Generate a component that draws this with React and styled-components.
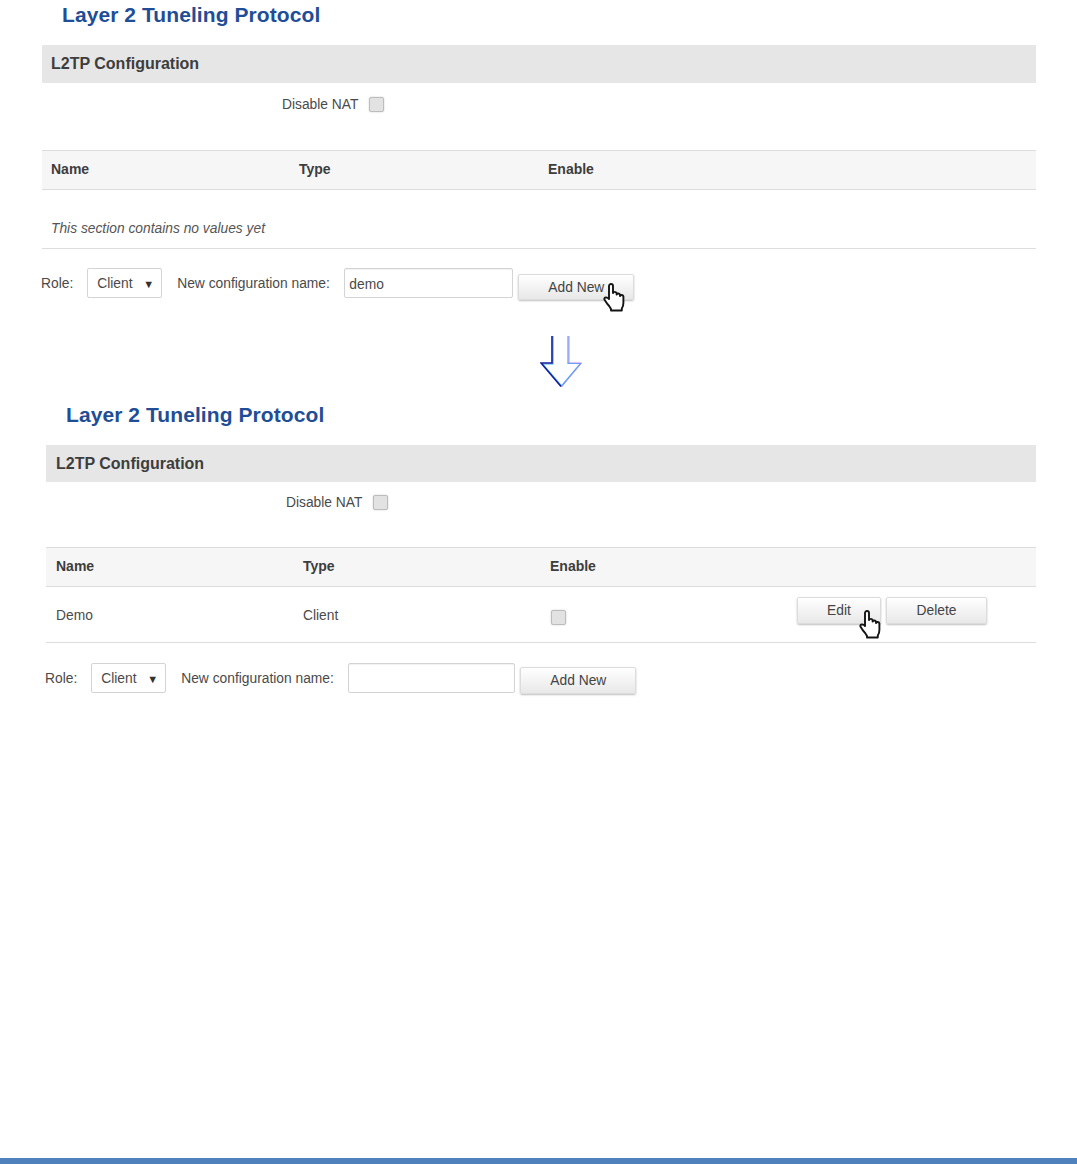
import styled, { createGlobalStyle } from "styled-components"

const Global = createGlobalStyle`
html, body {
  margin: 0;
  padding: 0;
  background: #ffffff;
}
body {
  font-family: "Liberation Sans", Arial, sans-serif;
  font-size: 13.8px;
  color: #4a4a4a;
}
`

const Page = styled.div`
display: flex;
flex-direction: column;
min-height: 1164px;
box-sizing: border-box;
`

const Panel = styled.section`
margin-left: ${p => p.$left}px;
width: ${p => 1036 - p.$left}px;
`

const Title = styled.h2`
margin: 0 0 ${p => p.$gap}px 20px;
font-size: 21px;
letter-spacing: 0.08px;
line-height: 30px;
font-weight: 700;
color: #1f4e96;
`

const SectionHead = styled.div`
height: ${p => p.$height}px;
line-height: ${p => p.$height}px;
padding-left: ${p => p.$pad}px;
background: #e6e6e6;
color: #3d3d3d;
font-size: 16px;
font-weight: 700;
`

const NatRow = styled.div`
display: flex;
align-items: center;
gap: 11px;
padding-left: 240px;
height: ${p => p.$height}px;
margin-bottom: ${p => p.$gap}px;
`

const Check = styled.input.attrs({ type: "checkbox", disabled: true })`
appearance: none;
box-sizing: border-box;
width: 15px;
height: 15px;
margin: ${p => p.$drop || 0}px 0 0 ${p => p.$indent || 0}px;
background: #e2e2e2;
border: 1px solid #bdbdbd;
border-radius: 2px;
box-shadow: 0 0 2px rgba(0, 0, 0, 0.2);
`

const TableHead = styled.div`
display: grid;
grid-template-columns: ${p => p.$cols};
align-items: center;
box-sizing: border-box;
height: ${p => p.$height}px;
padding: 0 0 2px ${p => p.$pad}px;
background: #f6f6f6;
border-top: 1px solid #dddddd;
border-bottom: 1px solid #dddddd;
color: #3d3d3d;
font-size: 14px;
font-weight: 700;
`

const TableRow = styled.div`
display: grid;
grid-template-columns: ${p => p.$cols};
align-items: center;
box-sizing: border-box;
height: 56px;
padding: 2px 0 0 ${p => p.$pad}px;
border-bottom: 1px solid #dddddd;
`

const EmptyRow = styled.div`
box-sizing: border-box;
height: 59px;
padding: 30px 0 0 ${p => p.$pad}px;
border-bottom: 1px solid #dddddd;
font-style: italic;
color: #555555;
line-height: 17px;
`

const Actions = styled.div`
display: flex;
gap: 5px;
margin-bottom: 11px;
`

const Button = styled.button`
position: relative;
box-sizing: border-box;
width: ${p => p.$width}px;
height: ${p => p.$height || 27}px;
padding: 0;
background: linear-gradient(#ffffff, #e8e8e8);
border: 1px solid #dcdcdc;
border-radius: 2px;
box-shadow: 0 1px 2px rgba(0, 0, 0, 0.25);
font-family: inherit;
font-size: 13.8px;
color: #444444;
`

const HandSvg = styled.svg`
position: absolute;
left: ${p => p.$x}px;
top: ${p => p.$y}px;
`

const FormRow = styled.div`
display: flex;
align-items: flex-start;
margin: ${p => p.$top}px 0 0 -1px;
height: 30px;
`

const Label = styled.span`
line-height: 32px;
margin-right: ${p => p.$gap}px;
white-space: nowrap;
`

const Select = styled.div`
display: flex;
align-items: center;
justify-content: space-between;
box-sizing: border-box;
width: 75px;
height: 30px;
padding: 1px 7px 0 9px;
margin-right: 15px;
border: 1px solid #d4d4d4;
border-radius: 2px;
`

const Caret = styled.span`
font-size: 11px;
color: #333333;
`

const TextInput = styled.input`
box-sizing: border-box;
width: ${p => p.$width}px;
height: 30px;
padding: 2px 4px 0;
margin-right: 5px;
border: 1px solid #d4d4d4;
border-radius: 2px;
box-shadow: inset 0 1px 1px rgba(0, 0, 0, 0.06);
font-family: inherit;
font-size: 13.8px;
color: #4a4a4a;
`

const ButtonSlot = styled.div`
margin-top: ${p => p.$top}px;
`

const ArrowWrap = styled.div`
display: flex;
margin: 38px 0 12px 540px;
`

const BottomBar = styled.div`
margin-top: auto;
height: 6px;
background: #4f81bd;
`

const DownArrow = () => (
  <svg width="43" height="52" viewBox="0 0 43 52" fill="none">
    <path d="M13 0V28H2.5L21.5 50L40.5 27.5H28V0" stroke="#45aef7" strokeWidth="1.2" />
    <path d="M12 0V27H1L21 50.5" stroke="#14209a" strokeWidth="1.6" />
    <path d="M29 0V27H41.5L21.5 51" stroke="#a88bf0" strokeWidth="1" />
  </svg>
)

const Hand = ({ x, y }) => (
  <HandSvg $x={x} $y={y} width="22" height="29" viewBox="0 0 22 29">
    <path
      d="M6 16V3a2 2 0 0 1 4 0V10a2 2 0 0 1 3.6 0V11.5a1.9 1.9 0 0 1 3.4 0V13a1.8 1.8 0 0 1 3.4 .5V20q0 3-1.6 5.5V27.5H8V26Q6.5 23 4 20.5L1.4 16.5Q1 14.5 3 14.4Q4.5 14.5 6 16Z"
      fill="#ffffff"
      stroke="#141414"
      strokeWidth="1.9"
      strokeLinejoin="round"
    />
  </HandSvg>
)

const AddForm = ({ top, value, width, buttonTop, buttonHeight, hand }) => (
  <FormRow $top={top}>
    <Label $gap={14}>Role:</Label>
    <Select>
      Client
      <Caret>▼</Caret>
    </Select>
    <Label $gap={14.5}>New configuration name:</Label>
    <TextInput $width={width} defaultValue={value} readOnly />
    <ButtonSlot $top={buttonTop}>
      <Button $width={116} $height={buttonHeight}>
        Add New
        {hand && <Hand x={84} y={8} />}
      </Button>
    </ButtonSlot>
  </FormRow>
)

export default function App() {
  return (
    <Page>
      <Global />
      <Panel $left={42}>
        <Title $gap={15}>Layer 2 Tuneling Protocol</Title>
        <SectionHead $height={38} $pad={9}>L2TP Configuration</SectionHead>
        <NatRow $height={42} $gap={25}>
          Disable NAT
          <Check />
        </NatRow>
        <TableHead $height={40} $pad={9} $cols="248px 249px 1fr">
          <span>Name</span>
          <span>Type</span>
          <span>Enable</span>
        </TableHead>
        <EmptyRow $pad={9}>This section contains no values yet</EmptyRow>
        <AddForm top={19} value="demo" width={169} buttonTop={6} buttonHeight={26} hand />
      </Panel>
      <ArrowWrap>
        <DownArrow />
      </ArrowWrap>
      <Panel $left={46}>
        <Title $gap={15}>Layer 2 Tuneling Protocol</Title>
        <SectionHead $height={37} $pad={10}>L2TP Configuration</SectionHead>
        <NatRow $height={40} $gap={25}>
          Disable NAT
          <Check />
        </NatRow>
        <TableHead $height={40} $pad={10} $cols="247px 247px 1fr">
          <span>Name</span>
          <span>Type</span>
          <span>Enable</span>
        </TableHead>
        <TableRow $pad={10} $cols="247px 247px 247px 1fr">
          <span>Demo</span>
          <span>Client</span>
          <Check $drop={4} $indent={1} />
          <Actions>
            <Button $width={84}>
              Edit
              <Hand x={61} y={12} />
            </Button>
            <Button $width={101}>Delete</Button>
          </Actions>
        </TableRow>
        <AddForm top={20} value="" width={167} buttonTop={4} buttonHeight={27} />
      </Panel>
      <BottomBar />
    </Page>
  )
}
